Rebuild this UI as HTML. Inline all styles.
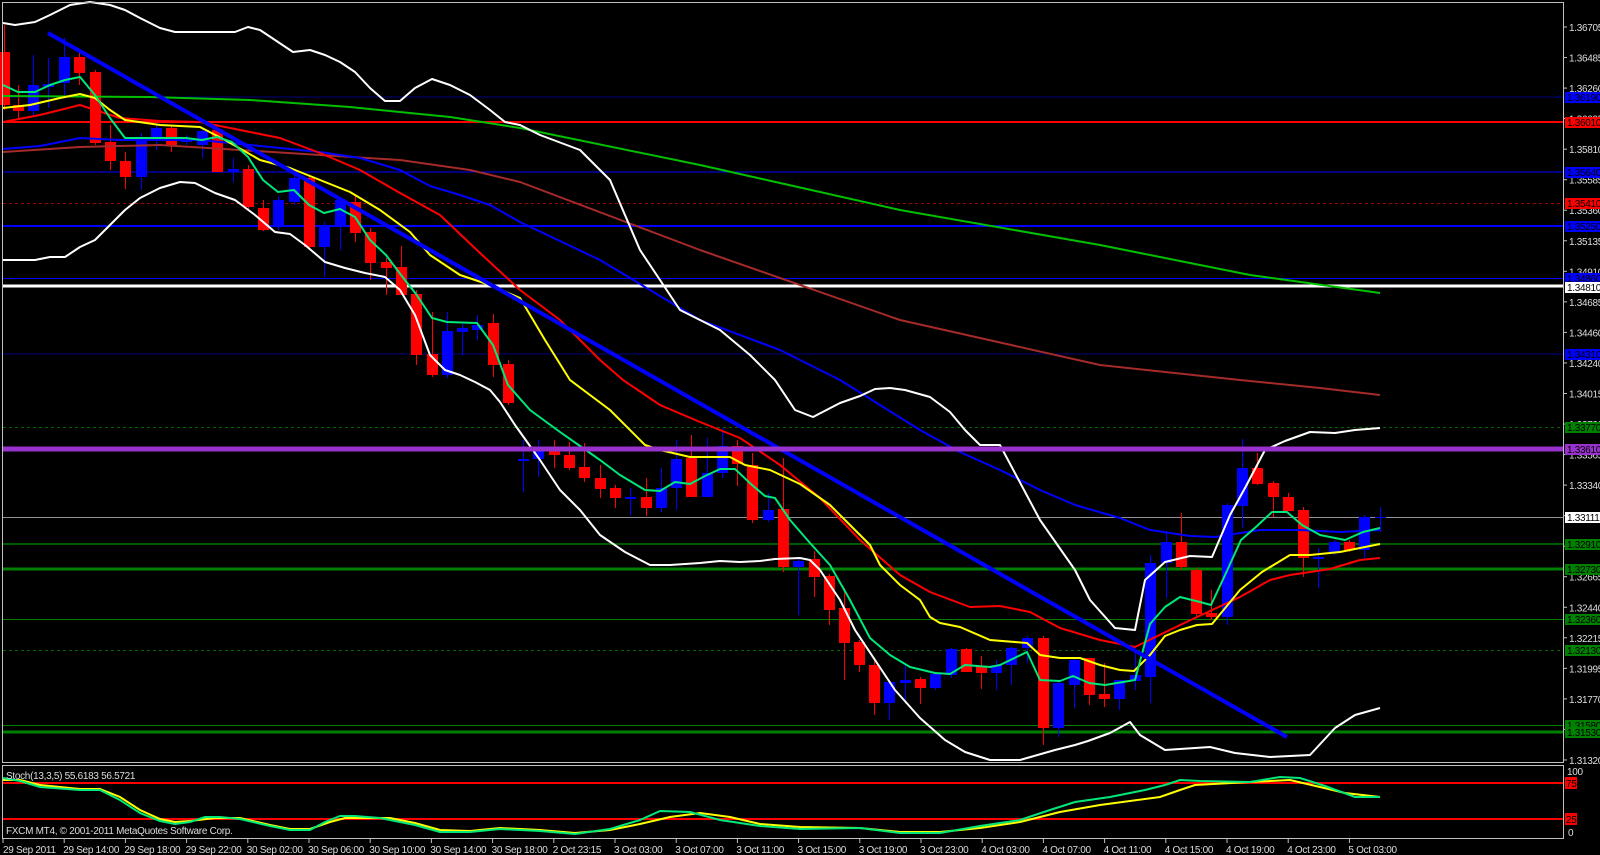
<!DOCTYPE html>
<html><head><meta charset="utf-8"><style>
html,body{margin:0;padding:0;background:#000;width:1600px;height:855px;overflow:hidden}
svg{display:block}
text{font-family:"Liberation Sans",sans-serif;font-size:11px}
.tl{font-size:10px;letter-spacing:-0.3px}
</style></head><body>
<svg id="s" width="1600" height="855" viewBox="0 0 1600 855" xmlns="http://www.w3.org/2000/svg">
<rect width="1600" height="855" fill="#000"/>
<g id="hl" shape-rendering="crispEdges">
<line x1="3" x2="1563" y1="97" y2="97" stroke="#000080" stroke-width="1"/>
<line x1="3" x2="1563" y1="122" y2="122" stroke="#ff0000" stroke-width="2"/>
<line x1="3" x2="1563" y1="172" y2="172" stroke="#0000ff" stroke-width="1"/>
<line x1="3" x2="1563" y1="203.5" y2="203.5" stroke="#a00000" stroke-width="1" stroke-dasharray="3,3"/>
<line x1="3" x2="1563" y1="226" y2="226" stroke="#0000ff" stroke-width="2"/>
<line x1="3" x2="1563" y1="278.5" y2="278.5" stroke="#0000ff" stroke-width="1"/>
<line x1="3" x2="1563" y1="286" y2="286" stroke="#ffffff" stroke-width="3"/>
<line x1="3" x2="1563" y1="354" y2="354" stroke="#000080" stroke-width="1"/>
<line x1="3" x2="1563" y1="427.5" y2="427.5" stroke="#006400" stroke-width="1" stroke-dasharray="3,3"/>
<line x1="3" x2="1563" y1="517.5" y2="517.5" stroke="#909090" stroke-width="1"/>
<line x1="3" x2="1563" y1="544" y2="544" stroke="#005a00" stroke-width="2"/>
<line x1="3" x2="1563" y1="569" y2="569" stroke="#008000" stroke-width="3"/>
<line x1="3" x2="1563" y1="619.5" y2="619.5" stroke="#008000" stroke-width="1"/>
<line x1="3" x2="1563" y1="650.5" y2="650.5" stroke="#006400" stroke-width="1" stroke-dasharray="3,3"/>
<line x1="3" x2="1563" y1="725.5" y2="725.5" stroke="#008000" stroke-width="1"/>
<line x1="3" x2="1563" y1="732" y2="732" stroke="#008000" stroke-width="3"/>
</g>
<g id="candles"></g>
<g fill="none" stroke-linejoin="round">
<polyline stroke="#00c000" stroke-width="2" points="3,96 150,97 250,100 350,107 450,117 520,128 700,165 900,210 1100,245 1250,275 1380,293"/>
<polyline stroke="#a52a2a" stroke-width="2" points="3,152 80,147 160,145 240,150 320,155 400,160 470,170 520,182 700,250 900,320 1100,365 1240,380 1320,388 1380,395"/>
<polyline stroke="#0000ff" stroke-width="2" points="3,149 40,146 80,138 120,140 200,140 280,148 320,152 360,158 400,170 430,186 460,195 490,205 520,222 600,260 700,320 780,350 840,380 880,405 920,430 960,452 1000,470 1040,490 1075,505 1120,518 1150,530 1190,536 1215,537 1260,530 1300,530 1340,532 1380,530"/>
<polyline stroke="#ff0000" stroke-width="2" points="3,122 40,115 80,105 95,110 120,118 160,121 200,122 240,130 280,138 320,153 360,170 400,193 440,215 480,253 520,290 560,320 600,360 623,380 660,405 700,422 740,438 780,465 820,498 860,540 900,575 930,592 970,607 1000,606 1030,612 1045,620 1060,628 1100,640 1135,647 1180,625 1240,597 1270,580 1290,575 1330,569 1360,560 1380,558"/>
<polyline stroke="#ffff00" stroke-width="2" points="3,108 30,105 60,98 80,94 95,98 110,110 125,120 160,125 200,127 225,140 260,160 290,168 320,180 350,192 380,210 410,232 430,255 460,275 490,285 520,298 545,340 570,380 610,410 645,445 660,450 690,457 730,457 745,465 770,470 800,484 830,505 850,525 870,545 880,565 900,585 920,600 930,617 940,623 960,627 990,640 1027,643 1040,655 1060,658 1080,658 1100,665 1120,670 1134,671 1150,655 1165,636 1180,630 1197,625 1212,624 1240,590 1262,572 1290,555 1310,555 1340,552 1380,544"/>
<polyline stroke="#00e87a" stroke-width="2" points="3,85 18,92 35,92 50,85 65,80 80,77 95,95 110,118 125,138 160,138 186,138 202,140 217,137 232,142 248,157 263,180 278,192 294,190 309,205 324,213 340,209 355,217 370,240 386,255 401,275 416,294 432,318 447,322 477,323 493,345 508,385 530,410 560,432 580,446 600,460 620,475 645,490 660,491 675,482 690,484 705,476 720,469 735,469 752,485 765,496 775,498 790,520 810,543 830,565 850,600 870,638 890,655 910,667 935,673 950,674 965,665 990,667 1000,665 1027,652 1040,680 1060,681 1073,676 1089,683 1105,685 1135,680 1150,624 1165,607 1180,597 1200,602 1211,605 1226,573 1241,540 1257,526 1272,512 1287,512 1302,525 1320,535 1345,540 1363,532 1380,528"/>
<polyline stroke="#ffffff" stroke-width="2" points="3,23 15,25 35,22 50,15 70,5 90,2 110,5 125,10 140,18 160,28 175,32 190,32 235,32 248,27 260,30 275,40 293,52 310,50 325,55 340,62 355,72 370,88 385,101 400,101 415,88 432,79 450,85 470,95 490,110 505,122 520,125 540,135 580,150 610,180 640,250 680,310 720,330 750,355 775,380 795,410 813,417 840,403 860,396 875,389 890,388 905,390 930,397 950,412 965,430 980,445 1000,445 1040,520 1075,570 1090,600 1115,628 1135,630 1145,580 1165,562 1190,556 1212,557 1230,515 1245,488 1265,450 1285,441 1310,432 1335,433 1355,430 1380,428"/>
<polyline stroke="#ffffff" stroke-width="2" points="3,260 35,260 50,257 65,257 80,247 95,240 110,225 125,210 140,198 160,188 180,182 195,183 215,193 235,200 255,215 275,232 290,234 305,245 325,262 345,268 365,273 385,277 400,290 415,315 430,355 445,370 460,375 475,382 490,390 500,402 515,425 540,460 560,490 580,510 600,535 625,552 650,565 670,565 700,563 720,561 740,562 760,561 775,559 800,558 810,560 820,570 840,600 855,630 875,660 895,690 920,718 945,740 965,752 990,760 1020,760 1055,750 1075,745 1088,741 1110,733 1130,722 1140,735 1165,750 1210,747 1235,753 1270,757 1310,755 1335,728 1355,715 1380,708"/>
<line x1="48" y1="33" x2="1287" y2="737" stroke="#0000ff" stroke-width="4"/>
</g>
<line x1="3" x2="1563" y1="449" y2="449" stroke="#9932cc" stroke-width="5" shape-rendering="crispEdges"/>
<rect x="0" y="763" width="1563" height="92" fill="#000"/>
<g shape-rendering="crispEdges">
<line x1="3" x2="1563" y1="783" y2="783" stroke="#ff0000" stroke-width="2"/>
<line x1="3" x2="1563" y1="819" y2="819" stroke="#ff0000" stroke-width="2"/>
</g>
<g fill="none" stroke-width="2">
<polyline stroke="#ffff00" points="3,780 20,780 40,785 80,789 100,789 120,797 140,810 160,819 175,822 190,821 215,818 240,818 270,825 290,829 310,829 330,822 345,818 360,818 390,818 415,823 440,830 470,831 500,828 540,830 575,833 610,830 640,824 670,817 700,813 730,817 760,824 800,827 860,828 900,832 940,832 980,828 1020,822 1060,812 1100,805 1160,797 1180,790 1195,785 1250,782 1290,780 1320,787 1345,793 1380,797"/>
<polyline stroke="#00e87a" points="3,778 20,781 40,787 80,790 100,790 120,800 140,813 160,821 175,824 190,822 205,817 220,817 240,819 270,826 290,830 310,830 325,822 340,816 355,816 380,818 415,825 440,832 470,832 500,829 540,831 575,834 610,829 640,820 660,811 690,812 720,820 760,826 800,829 860,828 900,833 940,833 980,826 1020,820 1050,810 1075,802 1110,797 1145,790 1165,785 1180,780 1200,781 1250,782 1280,777 1300,778 1325,786 1355,797 1380,797"/>
</g>
<g fill="none" stroke="#c0c0c0" stroke-width="1" shape-rendering="crispEdges">
<rect x="2.5" y="2.5" width="1561" height="760"/>
<rect x="2.5" y="765.5" width="1561" height="73"/>
</g>
<g fill="#ddd">
<text x="6" y="779" class="tl">Stoch(13,3,5) 55.6183 56.5721</text>
<text x="6" y="834" class="tl">FXCM MT4, © 2001-2011 MetaQuotes Software Corp.</text>
</g>
<g id="axis" fill="#ddd"></g>
</svg>
<script>
var NS="http://www.w3.org/2000/svg";
function el(p,t,a,txt){var e=document.createElementNS(NS,t);for(var k in a)e.setAttribute(k,a[k]);if(txt!==undefined)e.textContent=txt;p.appendChild(e);return e;}
var C=[
['r',4,52,105,25,110],['r',18,105,111,85,120],['b',33,85,111,55,115],['b',48,84,87,58,108],['b',64,57,83,38,95],['r',79,57,73,50,85],['r',95,72,143,70,145],['r',110,142,161,125,170],['r',125,161,177,152,189],['b',141,138,177,133,190],['b',156,128,138,125,150],['r',171,128,145,125,152],['b',186,139,142,135,145],['b',202,131,145,129,158],['r',217,130,172,125,172],['b',233,169,172,158,182],['r',248,169,207,165,210],['r',263,208,230,200,231],['b',278,200,226,196,230],['b',294,178,202,175,205],['r',309,178,247,176,250],['b',324,227,247,222,277],['b',340,200,227,198,250],['r',355,202,233,195,242],['r',370,232,263,228,280],['r',386,262,268,258,295],['r',401,267,295,246,295],['r',416,294,355,290,365],['r',432,354,375,312,377],['b',447,331,375,312,378],['b',462,328,332,324,355],['b',477,325,330,315,340],['r',493,323,365,314,377],['r',508,364,403,360,405],
['b',523,459,461,440,492],['b',538,450,459,440,477],['r',554,449,455,440,468],['r',569,455,468,442,470],['r',584,467,478,443,482],['r',600,478,489,465,498],['r',615,488,498,485,508],['b',630,497,499,488,515],['r',646,497,508,478,516],['b',661,488,508,468,512],['b',676,459,488,440,510],['r',691,458,497,435,497],['b',707,473,497,438,497],['b',722,446,473,428,478],['r',737,446,464,440,486],['r',752,465,520,453,523],['b',768,510,520,493,522],['r',783,509,567,458,572],['b',798,561,567,558,615],['r',814,559,577,551,597],['r',829,576,610,574,625],['r',844,608,643,588,680],['r',859,642,665,640,672],['r',874,665,703,658,715],['b',889,682,703,680,720],['b',905,680,683,665,702],['r',920,679,688,677,704],['b',935,674,688,672,690],['b',951,649,675,648,678],['r',966,649,672,648,672],['r',981,666,673,656,689],['b',996,665,673,660,690],['b',1011,648,665,647,685],
['b',1027,638,648,636,663],['r',1043,638,728,636,745],['b',1058,683,728,681,737],['b',1074,660,685,658,708],['r',1089,658,695,658,705],['r',1104,694,699,663,707],['b',1119,680,699,680,710],['b',1135,675,681,652,690],['b',1150,563,677,555,703],['b',1166,542,563,531,598],['r',1181,542,567,513,570],['r',1196,570,614,568,617],['r',1211,613,617,590,620],['b',1227,505,617,503,625],['b',1242,468,506,439,528],['r',1257,468,484,453,485],['r',1273,483,497,481,517],['r',1288,497,511,493,511],['r',1303,510,558,507,577],['b',1318,557,559,548,588],['b',1334,542,553,540,555],['r',1349,542,550,540,552],['b',1364,517,550,515,558],['b',1380,517,518,507,532]];
var g=document.getElementById('candles');
C.forEach(function(c){var col=c[0]=='r'?'#ff0000':'#0000ff';
el(g,'line',{x1:c[1]+0.5,x2:c[1]+0.5,y1:c[4],y2:c[5],stroke:col,'stroke-width':1,'shape-rendering':'crispEdges'});
var h=Math.max(1,c[3]-c[2]);el(g,'rect',{x:c[1]-5,y:c[2],width:11,height:h,fill:col,'shape-rendering':'crispEdges'});});
var ax=document.getElementById('axis');
var P=["1.36705","1.36485","1.36260","1.36035","1.35810","1.35585","1.35360","1.35135","1.34910","1.34685","1.34460","1.34240","1.34015","1.33790","1.33565","1.33340","1.33115","1.32890","1.32665","1.32440","1.32215","1.31995","1.31770","1.31545","1.31320"];
P.forEach(function(p,i){var y=27+i*30.54;el(ax,'line',{x1:1563,x2:1567,y1:y,y2:y,stroke:'#c0c0c0'});el(ax,'text',{x:1569,y:y+4,fill:'#ddd','class':'tl'},p);});
var B=[[97,'#0000ff','1.36190'],[122,'#ff0000','1.36010'],[172,'#0000ff','1.35640'],[203,'#ff0000','1.35410'],[226,'#0000ff','1.35250'],[278,'#0000ff','1.34860'],[287,'#ffffff','1.34810'],[354,'#0000ff','1.34310'],[427,'#008000','1.33770'],[449,'#9932cc','1.33610'],[517,'#ffffff','1.33111'],[544,'#008000','1.32910'],[569,'#008000','1.32730'],[619,'#008000','1.32360'],[650,'#008000','1.32130'],[725,'#008000','1.31580'],[732,'#008000','1.31530']];
B.forEach(function(b){el(ax,'rect',{x:1565,y:b[0]-5,width:35,height:11,fill:b[1]});el(ax,'text',{x:1567,y:b[0]+4,fill:'#000','class':'tl'},b[2]);});
el(ax,'text',{x:1567,y:775,fill:'#ddd','class':'tl'},'100');
el(ax,'rect',{x:1565,y:777,width:12,height:12,fill:'#ff0000'});el(ax,'text',{x:1566,y:787,fill:'#000','class':'tl'},'75');
el(ax,'rect',{x:1565,y:813,width:12,height:12,fill:'#ff0000'});el(ax,'text',{x:1566,y:823,fill:'#000','class':'tl'},'25');
el(ax,'text',{x:1568,y:836,fill:'#ddd','class':'tl'},'0');
var T=["29 Sep 2011","29 Sep 14:00","29 Sep 18:00","29 Sep 22:00","30 Sep 02:00","30 Sep 06:00","30 Sep 10:00","30 Sep 14:00","30 Sep 18:00","2 Oct 23:15","3 Oct 03:00","3 Oct 07:00","3 Oct 11:00","3 Oct 15:00","3 Oct 19:00","3 Oct 23:00","4 Oct 03:00","4 Oct 07:00","4 Oct 11:00","4 Oct 15:00","4 Oct 19:00","4 Oct 23:00","5 Oct 03:00"];
T.forEach(function(t,i){var x=3+i*61.2;el(ax,'line',{x1:x,x2:x,y1:838,y2:843,stroke:'#c0c0c0'});el(ax,'text',{x:x+(i==0?0:-1),y:853,fill:'#ddd','class':'tl'},t);});
</script>
</body></html>
